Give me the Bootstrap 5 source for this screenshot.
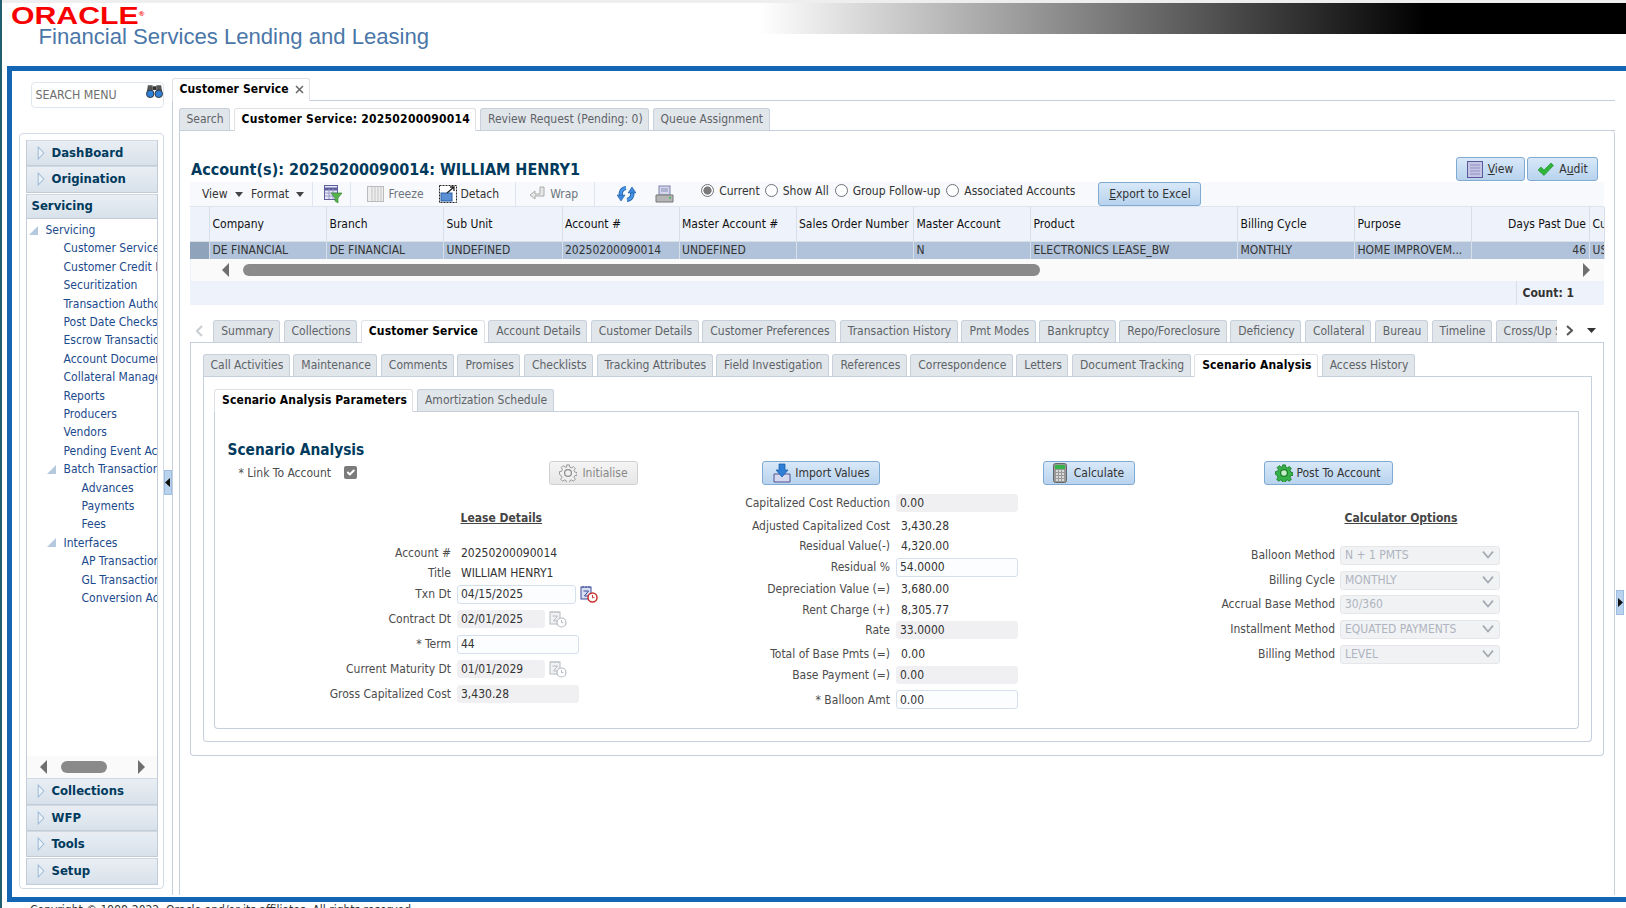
<!DOCTYPE html>
<html lang="en"><head><meta charset="utf-8"><title>Oracle Financial Services Lending and Leasing</title>
<link href="https://cdn.jsdelivr.net/npm/bootstrap@5.3.0/dist/css/bootstrap.min.css" rel="stylesheet">
<style>
html,body{margin:0;height:908px;overflow:hidden;background:#fff}
body{font-family:"DejaVu Sans Condensed","DejaVu Sans",sans-serif;font-size:12px;line-height:18px;color:#4c4c4c;width:1626px;border-left:2px solid #1f5f70;box-sizing:border-box}
.x-hdr{height:66px;border-top:3px solid #eeeeee;margin-left:-2px;padding-left:11px;background:linear-gradient(90deg,#fff 760px,#000 1426px) no-repeat 0 0/100% 31px;overflow:hidden}
.x-ora{font-family:"Liberation Sans",sans-serif;font-weight:700;font-size:24px;line-height:18px;color:#f80000;transform:scaleX(1.26);transform-origin:0 0;height:18px;margin-top:4px;overflow:visible}
.x-ora sup{font-size:6px;top:-1.4em}
.x-fin{font-family:"Liberation Sans",sans-serif;font-size:22.1px;line-height:20px;color:#4a76a8;padding-left:27.5px;margin-top:2px;white-space:nowrap}
.x-frame{margin-left:5px;height:836px;border:solid #1565b5;border-width:5px 0 5px 5.5px;display:flex;box-sizing:border-box}
.x-copy{margin-left:28px;color:#333;white-space:nowrap;font-size:12px;line-height:14px;margin-top:1px}
.x-left{width:151.5px;flex:none;padding-left:7px}
.x-search{margin:11px 0 25px 11.5px;height:26px;width:133px;border:1px solid #dfe6ee;border-radius:4px;padding:0 0 0 4px;font-size:12.3px;color:#6e6e6e;align-items:center}
.x-nav{height:756px;border:1px solid #d3dbe6;border-radius:4px;padding:6px 4.5px 3.5px 5.5px;box-sizing:border-box}
.x-acc{height:100%;display:flex;flex-direction:column}
.x-ah{height:26.3px;flex:none;display:flex;align-items:center;background:linear-gradient(#e9eef4,#d8e1ea);border:1px solid #c2ccd9;border-top-color:#d0d8e2;font-weight:700;font-size:13px;color:#003a5d;padding-left:10px;gap:7px;box-sizing:border-box}
.x-ah.x-open{padding-left:5px;margin-top:1px;height:25px}
.x-ah.x-last{margin-top:1px}
.x-tree{flex:1;min-height:0;border-left:1px solid #c2ccd9;border-right:1px solid #c2ccd9;display:flex;flex-direction:column;overflow:hidden}
.x-list{flex:1;list-style:none;margin:0;padding:2.5px 0 0;color:#1b4a8c;white-space:nowrap;overflow:hidden}
.x-list li{height:18.4px;line-height:18.4px;display:flex;align-items:center}
.x-list svg{flex:none}
.x-l1{padding-left:2px;gap:8px}.x-l2{padding-left:37px}.x-l2t{padding-left:20px;gap:8px}.x-l3{padding-left:55px}
.x-hs{height:22px;flex:none;background:#fafafa;display:flex;align-items:center;padding-left:13.5px}
.x-thumb{background:#8a8a8a;border-radius:6px;height:12px;flex:none}
.x-split{width:8px;flex:none;display:flex;align-items:center}
.x-grip{width:8px;height:25px;background:#b9d2ee;border:1px solid #9fbde0;display:flex;align-items:center;justify-content:center;margin-bottom:3px}
.x-main{flex:1;min-width:0;display:flex;flex-direction:column;height:818px;padding-top:7px;box-sizing:content-box}
.x-rsp{width:11px;flex:none;display:flex;align-items:center}
.x-rsp .x-grip{margin:237px 0 0 1px}
.nav.x-tabs{flex-wrap:nowrap;border-bottom:1px solid #c6d0dc;gap:3.5px;height:23px;align-items:flex-end;--bs-nav-tabs-border-width:0}
.x-tabs .nav-link{height:22px;line-height:20px;padding:0 5.5px 0 7px;font-size:12px;color:#5e6368;background:#e1e6ea;border:1px solid #c7d0db;border-bottom:0;border-radius:3px 3px 0 0;white-space:nowrap;margin:0}
.x-tabs .nav-link.active{background:#fff;color:#000;font-weight:700;height:23px;margin-bottom:-1px;letter-spacing:.13px}
.x-tabs .nav-link.active.x-wide{letter-spacing:.25px}
.x-xi{margin-left:2px}
.x-mb{flex:1;border-left:1px solid #c6d0dc;padding:7px 0 0 6px;min-height:0;display:flex;flex-direction:column;margin-bottom:1px}
.x-p1{flex:1;border:1px solid #c6d0dc;border-top:0;border-bottom:0;border-radius:0 4px 0 0;padding:0 10.5px;min-height:0}
.x-title{height:51px;padding-top:26px;align-items:flex-start}
.x-title h1{font-size:16px;line-height:19px;font-weight:700;color:#003a5d;margin:3px 0 0 1px}
.x-vb{gap:2.5px;margin-right:5.5px}
.x-tb{height:25px;background:#f8f9fc;align-items:center;color:#333;white-space:nowrap;border-bottom:1px solid #dfe5ee}
.x-div{width:1px;height:25px;background:#dfe5ee;flex:none}
.x-rad{appearance:none;width:13px;height:13px;border:1px solid #6d7278;border-radius:50%;background:#fff;margin:0 5px 0 0;flex:none}
.x-rad:checked{background:radial-gradient(circle,#7a7a7a 0 3.8px,#fff 4.4px)}
.x-radg{margin:-7px 0 0 27px}
.x-rs{margin-left:5px}.x-rm{margin-left:6px}
.x-btn.btn{--bs-btn-padding-y:0;--bs-btn-padding-x:0;height:24px;font-size:12px;line-height:22px;display:inline-flex;align-items:center;justify-content:center;gap:5px;color:#333;background:linear-gradient(#d8e8f8,#b8d3ee);border:1px solid #7faad2;border-radius:3px;white-space:nowrap;flex:none}
.x-btn.btn:disabled{color:#888;background:linear-gradient(#f4f4f4,#e7e7e7);border-color:#d0d0d0;opacity:1}
.x-btn.btn.x-g3{gap:3px}.x-btn.btn.x-g7{gap:7px}
.table.x-grid{table-layout:fixed;width:1414px;margin:0;color:#333;--bs-table-bg:transparent;border-collapse:collapse}
.x-grid th,.x-grid td{padding:0 3px 0 2.5px;font-weight:400;white-space:nowrap;overflow:hidden;border:0;border-right:1px solid #d8dfe9;box-shadow:none;vertical-align:middle}
.x-grid th{height:34px;background:#eef2fa;color:#111;border-bottom:1px solid #d8dfe9}
.x-grid td{height:17.5px;line-height:17px;background:#b1c3da;border-right-color:#d8dfe9}
.x-grid td:first-child{background:#8fa3bb}
.x-c0{width:19.5px}.x-c1{width:117px}.x-c2{width:118.5px}.x-c3{width:117.5px}.x-c4{width:207px}.x-c5{width:118px}.x-c6{width:14.5px}
.x-hbar{height:22px;background:#fafafa;align-items:center;border-left:1px solid #eef2fa}
.x-foot{height:24px;background:#eef2fa;justify-content:flex-end;margin-bottom:15px}
.x-count{width:88px;border-left:1px solid #d8dfe9;font-weight:700;color:#333;padding-left:6px;line-height:24px}
.x-tabrow{height:23px;border-bottom:1px solid #c6d0dc;align-items:flex-start;display:flex}
.x-clip{width:1367px;height:23px;flex:none;overflow:hidden}
.nav.x-tabs.x-t0{border:0;height:22px;gap:3.7px}
.x-chev{width:19.5px;flex:none;display:flex;align-items:center;justify-content:center;height:22px}
.x-tabend{padding-left:9px;height:22px;gap:14px;align-items:center;flex:1}
.x-p2{height:413px;border:1px solid #c6d0dc;border-top:0;border-radius:0 0 4px 4px;padding:11px 11px 0 11.5px;box-sizing:border-box}
.x-p3{height:365px;border:1px solid #c6d0dc;border-top:0;border-radius:0 0 4px 4px;padding:12px 11.5px 0 10.5px;box-sizing:border-box}
.x-p4{height:317px;border:1px solid #c6d0dc;border-top:0;border-radius:0 0 4px 4px;padding-top:28px;box-sizing:border-box}
.x-hd{font-size:15.3px;line-height:20px;font-weight:700;color:#003a5d;margin:0 0 1px 12.5px}
.x-btnrow{height:24px;align-items:center}
.x-link{width:334px;flex:none;padding-left:23.5px;gap:13px;align-items:center}
.x-link .form-check-input{width:13px;height:13px;margin:0;border-radius:2px;border:0;background-color:#7b7b7b;float:none;flex:none}
.x-cols{margin-top:9.5px;align-items:flex-start}
.x-fr{height:18px;display:flex;align-items:center;white-space:nowrap}
.x-lb{flex:none;text-align:right}
.x-ca{width:486px;flex:none}.x-ca .x-lb{width:236px;margin-right:6px}
.x-cb{width:400px;flex:none}.x-cb .x-lb{width:189px;margin-right:6px}
.x-cc{flex:1}.x-cc .x-lb{width:234px;margin-right:5px}
.x-v{padding-left:5px;color:#333}.x-ca .x-v{padding-left:4px}
.form-control.x-in{height:18px;min-height:0;padding:0 3px;font-size:12px;line-height:16px;border:1px solid #f0f0f2;background:#f0f0f2;color:#333;border-radius:3px;box-shadow:none;flex:none;width:122px}
.form-control.x-in.x-en{border-color:#d6e0ec;background:#fbfdff;height:19px}
.form-control.x-in.x-sh{width:88px}.form-control.x-in.x-md{width:119px}
.form-select.x-sel{height:19px;min-height:0;width:160px;padding:0 3px 0 4px;font-size:12px;line-height:16px;color:#aeb4bf;background-color:#f1f2f4;border:1px solid #e4e6ea;border-radius:3px;flex:none;background-size:14px 10px;background-position:right 4px center;opacity:1;--bs-form-select-bg-img:url("data:image/svg+xml,%3csvg xmlns='http://www.w3.org/2000/svg' viewBox='0 0 16 12'%3e%3cpath fill='none' stroke='%23a2a8b0' stroke-width='2' d='M2 2l6 7 6-7'/%3e%3c/svg%3e")}
.x-und{font-weight:700;text-decoration:underline;color:#444}
.x-ca .x-fr:nth-child(1){margin-top:14.5px}.x-ca .x-fr:nth-child(2){margin-top:17.5px}.x-ca .x-fr:nth-child(3){margin-top:2px}.x-ca .x-fr:nth-child(4){margin-top:3.3px}.x-ca .x-fr:nth-child(5){margin-top:7px}.x-ca .x-fr:nth-child(6){margin-top:7px}.x-ca .x-fr:nth-child(7){margin-top:7px}.x-ca .x-fr:nth-child(8){margin-top:6.5px}
.x-ca .x-fr:nth-child(1) .x-und{margin-left:245.5px}
.x-cb .x-fr:nth-child(2){margin-top:4.5px}.x-cb .x-fr:nth-child(3){margin-top:2px}.x-cb .x-fr:nth-child(4){margin-top:3.5px}.x-cb .x-fr:nth-child(5){margin-top:4px}.x-cb .x-fr:nth-child(6){margin-top:2.5px}.x-cb .x-fr:nth-child(7){margin-top:2.5px}.x-cb .x-fr:nth-child(8){margin-top:5.5px}.x-cb .x-fr:nth-child(9){margin-top:3px}.x-cb .x-fr:nth-child(10){margin-top:7px}
.x-cc .x-fr:nth-child(1){margin-top:14.5px}.x-cc .x-fr:nth-child(2){margin-top:19.500px}.x-cc .x-fr:nth-child(3){margin-top:7px}.x-cc .x-fr:nth-child(4){margin-top:6px}.x-cc .x-fr:nth-child(5){margin-top:7px}.x-cc .x-fr:nth-child(6){margin-top:7px}
.x-cc .x-fr:nth-child(1) .x-und{margin-left:243.5px}
.x-gi{color:#8f8f8f;--x-gf:#f0f0f0;--x-gc:#f0f0f0}
.x-gp{color:#1c7f29;--x-gf:#37b24a;--x-gc:#c6ecc9}
.x-hsl{margin:0 14px 0 0}.x-hsr{margin-left:31px}
.x-a1{margin-left:31px}.x-a2{margin-left:543px}.x-tm{margin-left:14px}
.x-f1{margin-left:11px}.x-d1{margin:0 16px 0 7px}.x-de{margin-left:15px}.x-w1{margin-left:5px}.x-w2{margin-left:5px}
.x-ic{margin-left:22px}.x-ic2{margin-left:19px}
.x-b69{width:69px}.x-b71{width:71px}.x-b103{width:103px;margin-left:23px}
.x-b89{width:89px}.x-b118{width:118px;margin-left:124px}.x-b92{width:92px;margin-left:162.5px}.x-b129{width:129px;margin-left:129px}
</style></head>
<body>
<svg width="0" height="0" class="d-block"><defs>
<symbol id="i-tri" viewBox="0 0 10 18"><path d="M1.500 1.500L8.500 9l-7 7.500z" fill="#eef3f8" stroke="#9dbbd9" stroke-width="1.300"/></symbol>
<symbol id="i-cal" viewBox="0 0 18 18"><rect x="1" y="2" width="10" height="12" fill="#d9dff0" stroke="#3b4a9c"/><path d="M3 1v2M6 1v2M9 1v2" stroke="#3b4a9c"/><path d="M3.500 6h5l-4 5h4.500" fill="none" stroke="#3b4a9c"/><circle cx="12.500" cy="12.500" r="4.500" fill="#fff" stroke="#c9302c" stroke-width="1.500"/><path d="M12.500 10v2.700h2" fill="none" stroke="#c9302c"/></symbol>
<symbol id="i-calg" viewBox="0 0 18 18"><rect x="1" y="2" width="10" height="12" fill="#f2f2f2" stroke="#b5bbc2"/><path d="M3 1v2M6 1v2M9 1v2" stroke="#b5bbc2"/><path d="M3.500 6h5l-4 5h4.500" fill="none" stroke="#b5bbc2"/><circle cx="12.500" cy="12.500" r="4.500" fill="#fff" stroke="#b5bbc2" stroke-width="1.200"/><path d="M12.500 10v2.700h2" fill="none" stroke="#b5bbc2"/></symbol>
<symbol id="i-gear" viewBox="0 0 20 20"><path d="M8.500 1h3l.5 2.500 1.800.8 2.200-1.400 2.100 2.100-1.400 2.200.8 1.800 2.500.5v3l-2.500.5-.8 1.800 1.400 2.200-2.100 2.100-2.200-1.400-1.800.8-.5 2.500h-3l-.5-2.500-1.800-.8-2.200 1.400-2.100-2.100 1.400-2.200-.8-1.800L.5 11.500v-3L3 8l.8-1.800-1.400-2.200 2.100-2.100 2.200 1.400L8.500 3.500z" style="fill:var(--x-gf)" stroke="currentColor" stroke-width="1"/><circle cx="10" cy="10" r="3.800" style="fill:var(--x-gc)" stroke="currentColor" stroke-width="1.400"/></symbol>
</defs></svg>

<header class="x-hdr">
  <div class="x-ora">ORACLE<sup>®</sup></div>
  <div class="x-fin">Financial Services Lending and Leasing</div>
</header>

<div class="x-frame">
  <aside class="x-left">
    <div class="x-search d-flex justify-content-between">
      <span>SEARCH MENU</span>
      <svg width="17" height="16" viewBox="0 0 18 16" class="align-self-start"><path d="M2 2h5v6H5.500L1 8z M16 2h-5v6h1.500L17 8z" fill="#555"/><rect x="7" y="3" width="4" height="4" fill="#333"/><circle cx="4.500" cy="11" r="4" fill="#2f7fd6" stroke="#333"/><circle cx="13.500" cy="11" r="4" fill="#2f7fd6" stroke="#333"/></svg>
    </div>
    <nav class="x-nav"><div class="x-acc">
      <div class="x-ah"><svg width="8" height="16"><use href="#i-tri"/></svg>DashBoard</div>
      <div class="x-ah"><svg width="8" height="16"><use href="#i-tri"/></svg>Origination</div>
      <div class="x-ah x-open">Servicing</div>
      <div class="x-tree">
        <ul class="x-list">
          <li class="x-l1"><svg width="9" height="9"><path d="M0 9L9 0v9z" fill="#b5c9de"/></svg>Servicing</li>
          <li class="x-l2">Customer Service</li><li class="x-l2">Customer Credit Limits</li><li class="x-l2">Securitization</li><li class="x-l2">Transaction Authorization</li><li class="x-l2">Post Date Checks</li><li class="x-l2">Escrow Transactions</li><li class="x-l2">Account Documents</li><li class="x-l2">Collateral Management</li><li class="x-l2">Reports</li><li class="x-l2">Producers</li><li class="x-l2">Vendors</li><li class="x-l2">Pending Event Actions</li>
          <li class="x-l2t"><svg width="9" height="9"><path d="M0 9L9 0v9z" fill="#b5c9de"/></svg>Batch Transactions</li>
          <li class="x-l3">Advances</li><li class="x-l3">Payments</li><li class="x-l3">Fees</li>
          <li class="x-l2t"><svg width="9" height="9"><path d="M0 9L9 0v9z" fill="#b5c9de"/></svg>Interfaces</li>
          <li class="x-l3">AP Transactions</li><li class="x-l3">GL Transactions</li><li class="x-l3">Conversion Accounts</li>
        </ul>
        <div class="x-hs">
          <svg class="x-hsl" width="7" height="14" viewBox="0 0 7 14"><path d="M7 0v14L0 7z" fill="#6f6f6f"/></svg>
          <div class="x-thumb" style="width:46px"></div>
          <svg class="x-hsr" width="7" height="14" viewBox="0 0 7 14"><path d="M0 0v14l7-7z" fill="#6f6f6f"/></svg>
        </div>
      </div>
      <div class="x-ah"><svg width="8" height="16"><use href="#i-tri"/></svg>Collections</div>
      <div class="x-ah"><svg width="8" height="16"><use href="#i-tri"/></svg>WFP</div>
      <div class="x-ah"><svg width="8" height="16"><use href="#i-tri"/></svg>Tools</div>
      <div class="x-ah x-last"><svg width="8" height="16"><use href="#i-tri"/></svg>Setup</div>
    </div></nav>
  </aside>
  <div class="x-split"><div class="x-grip"><svg width="5" height="9"><path d="M5 0v9L0 4.500z" fill="#111"/></svg></div></div>

  <main class="x-main">
    <ul class="nav nav-tabs x-tabs"><li class="nav-item"><a class="nav-link active" href="#">Customer Service <svg width="9" height="9" class="x-xi"><path d="M1 1l7 7M8 1l-7 7" stroke="#666" stroke-width="1.500"/></svg></a></li></ul>
    <div class="x-mb">
      <ul class="nav nav-tabs x-tabs">
        <li class="nav-item"><a class="nav-link" href="#">Search</a></li>
        <li class="nav-item"><a class="nav-link active x-wide" href="#">Customer Service: 20250200090014</a></li>
        <li class="nav-item"><a class="nav-link" href="#">Review Request (Pending: 0)</a></li>
        <li class="nav-item"><a class="nav-link" href="#">Queue Assignment</a></li>
      </ul>
      <div class="x-p1">
        <div class="x-title d-flex justify-content-between">
          <h1>Account(s): 20250200090014: WILLIAM HENRY1</h1>
          <div class="d-flex x-vb">
            <button class="btn x-btn x-b69" type="button"><svg width="16" height="17" viewBox="0 0 16 17"><rect x=".5" y=".5" width="15" height="16" fill="#c4c4e4" stroke="#59599c"/><path d="M3 4h10M3 7h10M3 10h10M3 13h10" stroke="#8f8fc4"/></svg><span><u>V</u>iew</span></button>
            <button class="btn x-btn x-b71" type="button"><svg width="17" height="14" viewBox="0 0 17 14"><path d="M1 8l3-3 3 3 7-7 2.500 2.500L7 13.500z" fill="#2fb53a" stroke="#1d8a28" stroke-width=".6"/></svg><span>A<u>u</u>dit</span></button>
          </div>
        </div>
        <div class="x-tb d-flex">
          <span class="ms-2 ps-1">View <svg width="8" height="5" class="ms-1"><path d="M0 0h8L4 5z" fill="#444"/></svg></span>
          <span class="ms-2">Format <svg width="8" height="5" class="ms-1"><path d="M0 0h8L4 5z" fill="#444"/></svg></span>
          <span class="x-div ms-2"></span>
          <svg class="x-f1" width="19" height="18" viewBox="0 0 19 18"><rect x=".5" y=".5" width="13" height="14" fill="#e7e7f5" stroke="#5f5fa0"/><path d="M1 4h12" stroke="#5f5fa0" stroke-width="3"/><path d="M1 8h12M1 11h12M5 4v10M9 4v10" stroke="#9a9acb"/><path d="M7 8h11l-4 5v5l-3-2v-3z" fill="#56b34d" stroke="#2e7f2a" stroke-width=".6"/></svg>
          <span class="x-div x-d1"></span>
          <svg width="17" height="18" viewBox="0 0 17 18"><rect x=".5" y="1.500" width="16" height="15" fill="#eee" stroke="#bbb"/><path d="M5 2v14M8 2v14M11 2v14M14 2v14" stroke="#c4c4c4"/></svg>
          <span class="ms-1 text-secondary">Freeze</span>
          <svg class="x-de" width="18" height="18" viewBox="0 0 18 18"><rect x=".5" y=".5" width="17" height="17" fill="#fff" stroke="#222" stroke-dasharray="2 1"/><rect x="2" y="8" width="11" height="8" fill="#5b8fd3" stroke="#2b5ea5"/><path d="M8 8l7-6M11 2h4v4" fill="none" stroke="#222" stroke-width="1.300"/></svg>
          <span class="ms-1">Detach</span>
          <span class="x-div ms-3 me-2"></span>
          <svg class="x-w1" width="16" height="16" viewBox="0 0 16 16"><path d="M11 1h4v9H6v3L1 9l5-4v3h5z" fill="#e8e8e8" stroke="#a9a9a9"/></svg>
          <span class="x-w2 text-secondary">Wrap</span>
          <span class="x-div ms-3"></span>
          <svg class="x-ic" width="19" height="18" viewBox="0 0 19 18"><path d="M9 3A6 6 0 0 0 4 11" fill="none" stroke="#1a5aa8" stroke-width="4.200"/><path d="M9 3A6 6 0 0 0 4 11" fill="none" stroke="#4a96e6" stroke-width="2.600"/><path d="M0 10h8l-4 6z" fill="#3d86d8" stroke="#1a5aa8" stroke-width=".6"/><path d="M10 15a6 6 0 0 0 5-8" fill="none" stroke="#1a5aa8" stroke-width="4.200"/><path d="M10 15a6 6 0 0 0 5-8" fill="none" stroke="#4a96e6" stroke-width="2.600"/><path d="M19 8h-8l4-6z" fill="#3d86d8" stroke="#1a5aa8" stroke-width=".6"/></svg>
          <svg class="x-ic2" width="19" height="18" viewBox="0 0 19 18"><rect x="4" y="1" width="11" height="9" fill="#d4d6ee" stroke="#7f82a8"/><path d="M1 10h17v7H1z" fill="#b5b5b5" stroke="#777"/><path d="M6 4h7M6 6h7" stroke="#8c8fb5"/><rect x="14" y="12" width="2" height="1.500" fill="#3bb54a"/></svg>
          <div class="d-flex align-items-center x-radg">
            <input class="x-rad" type="radio" name="acc" checked aria-label="Current"><span>Current</span>
            <input class="x-rad x-rs" type="radio" name="acc" aria-label="Show All"><span>Show All</span>
            <input class="x-rad x-rm" type="radio" name="acc" aria-label="Group Follow-up"><span>Group Follow-up</span>
            <input class="x-rad x-rm" type="radio" name="acc" aria-label="Associated Accounts"><span>Associated Accounts</span>
          </div>
          <button class="btn x-btn x-b103" type="button"><span><u>E</u>xport to Excel</span></button>
        </div>
        <table class="table x-grid">
          <thead><tr><th class="x-c0"></th><th class="x-c1">Company</th><th class="x-c1">Branch</th><th class="x-c2">Sub Unit</th><th class="x-c1">Account #</th><th class="x-c1">Master Account #</th><th class="x-c3">Sales Order Number</th><th class="x-c1">Master Account</th><th class="x-c4">Product</th><th class="x-c1">Billing Cycle</th><th class="x-c1">Purpose</th><th class="x-c5 text-end">Days Past Due</th><th class="x-c6">Cu</th></tr></thead>
          <tbody><tr><td></td><td>DE FINANCIAL</td><td>DE FINANCIAL</td><td>UNDEFINED</td><td>20250200090014</td><td>UNDEFINED</td><td></td><td>N</td><td>ELECTRONICS LEASE_BW</td><td>MONTHLY</td><td>HOME IMPROVEM...</td><td class="text-end">46</td><td>US</td></tr></tbody>
        </table>
        <div class="x-hbar d-flex">
          <svg class="x-a1" width="7" height="14" viewBox="0 0 7 14"><path d="M7 0v14L0 7z" fill="#6f6f6f"/></svg>
          <div class="x-thumb x-tm" style="width:797px"></div>
          <svg class="x-a2" width="7" height="14" viewBox="0 0 7 14"><path d="M0 0v14l7-7z" fill="#6f6f6f"/></svg>
        </div>
        <div class="x-foot d-flex"><div class="x-count">Count: 1</div></div>

        <div class="x-tabrow">
          <div class="x-clip">
            <ul class="nav nav-tabs x-tabs x-t0">
              <li class="nav-item x-chev"><svg width="7" height="12"><path d="M6 1L1 6l5 5" fill="none" stroke="#c9ced5" stroke-width="2"/></svg></li>
              <li class="nav-item"><a class="nav-link" href="#">Summary</a></li><li class="nav-item"><a class="nav-link" href="#">Collections</a></li><li class="nav-item"><a class="nav-link active" href="#">Customer Service</a></li><li class="nav-item"><a class="nav-link" href="#">Account Details</a></li><li class="nav-item"><a class="nav-link" href="#">Customer Details</a></li><li class="nav-item"><a class="nav-link" href="#">Customer Preferences</a></li><li class="nav-item"><a class="nav-link" href="#">Transaction History</a></li><li class="nav-item"><a class="nav-link" href="#">Pmt Modes</a></li><li class="nav-item"><a class="nav-link" href="#">Bankruptcy</a></li><li class="nav-item"><a class="nav-link" href="#">Repo/Foreclosure</a></li><li class="nav-item"><a class="nav-link" href="#">Deficiency</a></li><li class="nav-item"><a class="nav-link" href="#">Collateral</a></li><li class="nav-item"><a class="nav-link" href="#">Bureau</a></li><li class="nav-item"><a class="nav-link" href="#">Timeline</a></li><li class="nav-item"><a class="nav-link" href="#">Cross/Up Sell</a></li>
            </ul>
          </div>
          <div class="d-flex x-tabend">
            <svg width="7" height="11"><path d="M1 1l5 4.500L1 10" fill="none" stroke="#555" stroke-width="2"/></svg>
            <svg width="9" height="5"><path d="M0 0h9L4.500 5z" fill="#333"/></svg>
          </div>
        </div>
        <div class="x-p2">
          <ul class="nav nav-tabs x-tabs">
            <li class="nav-item"><a class="nav-link" href="#">Call Activities</a></li><li class="nav-item"><a class="nav-link" href="#">Maintenance</a></li><li class="nav-item"><a class="nav-link" href="#">Comments</a></li><li class="nav-item"><a class="nav-link" href="#">Promises</a></li><li class="nav-item"><a class="nav-link" href="#">Checklists</a></li><li class="nav-item"><a class="nav-link" href="#">Tracking Attributes</a></li><li class="nav-item"><a class="nav-link" href="#">Field Investigation</a></li><li class="nav-item"><a class="nav-link" href="#">References</a></li><li class="nav-item"><a class="nav-link" href="#">Correspondence</a></li><li class="nav-item"><a class="nav-link" href="#">Letters</a></li><li class="nav-item"><a class="nav-link" href="#">Document Tracking</a></li><li class="nav-item"><a class="nav-link active" href="#">Scenario Analysis</a></li><li class="nav-item"><a class="nav-link" href="#">Access History</a></li>
          </ul>
          <div class="x-p3">
            <ul class="nav nav-tabs x-tabs">
              <li class="nav-item"><a class="nav-link active" href="#">Scenario Analysis Parameters</a></li><li class="nav-item"><a class="nav-link" href="#">Amortization Schedule</a></li>
            </ul>
            <div class="x-p4">
              <h2 class="x-hd">Scenario Analysis</h2>
              <div class="x-btnrow d-flex">
                <label class="x-link d-flex"><span>* Link To Account</span><input class="form-check-input" type="checkbox" checked></label>
                <button class="btn x-btn x-b89" disabled type="button"><svg class="x-gi" width="18" height="18"><use href="#i-gear"/></svg>Initialise</button>
                <button class="btn x-btn x-b118 x-g3" type="button"><svg width="20" height="20" viewBox="0 0 20 20"><path d="M2 11h16v8H2z" fill="#d5d8ee" stroke="#4e5391"/><path d="M7 1h6v6h3l-6 7-6-7h3z" fill="#2f7fd6" stroke="#1a5aa8" stroke-width=".7"/></svg>Import Values</button>
                <button class="btn x-btn x-b92 x-g7" type="button"><svg width="14" height="20" viewBox="0 0 14 20"><rect x=".5" y=".5" width="13" height="19" rx="2" fill="#9a9a9a" stroke="#666"/><rect x="2" y="2" width="10" height="4" fill="#36b44a"/><path d="M3 8h2M6 8h2M9 8h2M3 11h2M6 11h2M9 11h2M3 14h2M6 14h2M9 14h2M3 17h2M6 17h2M9 17h2" stroke="#eee" stroke-width="1.500"/></svg>Calculate</button>
                <button class="btn x-btn x-b129 x-g3" type="button"><svg class="x-gp" width="18" height="18"><use href="#i-gear"/></svg>Post To Account</button>
              </div>
              <div class="x-cols d-flex">
                <div class="x-ca">
                  <div class="x-fr"><span class="x-und">Lease Details</span></div>
                  <div class="x-fr"><span class="x-lb">Account #</span><span class="x-v">20250200090014</span></div>
                  <div class="x-fr"><span class="x-lb">Title</span><span class="x-v">WILLIAM HENRY1</span></div>
                  <div class="x-fr"><span class="x-lb">Txn Dt</span><input class="form-control x-in x-en x-md" value="04/15/2025" aria-label="Txn Dt"><svg class="ms-1" width="18" height="18"><use href="#i-cal"/></svg></div>
                  <div class="x-fr"><span class="x-lb">Contract Dt</span><input class="form-control x-in x-sh" value="02/01/2025" readonly aria-label="Contract Dt"><svg class="ms-1" width="18" height="18"><use href="#i-calg"/></svg></div>
                  <div class="x-fr"><span class="x-lb">* Term</span><input class="form-control x-in x-en" value="44" aria-label="Term"></div>
                  <div class="x-fr"><span class="x-lb">Current Maturity Dt</span><input class="form-control x-in x-sh" value="01/01/2029" readonly aria-label="Current Maturity Dt"><svg class="ms-1" width="18" height="18"><use href="#i-calg"/></svg></div>
                  <div class="x-fr"><span class="x-lb">Gross Capitalized Cost</span><input class="form-control x-in" value="3,430.28" readonly aria-label="Gross Capitalized Cost"></div>
                </div>
                <div class="x-cb">
                  <div class="x-fr"><span class="x-lb">Capitalized Cost Reduction</span><input class="form-control x-in" value="0.00" readonly aria-label="Capitalized Cost Reduction"></div>
                  <div class="x-fr"><span class="x-lb">Adjusted Capitalized Cost</span><span class="x-v">3,430.28</span></div>
                  <div class="x-fr"><span class="x-lb">Residual Value(-)</span><span class="x-v">4,320.00</span></div>
                  <div class="x-fr"><span class="x-lb">Residual %</span><input class="form-control x-in x-en" value="54.0000" aria-label="Residual %"></div>
                  <div class="x-fr"><span class="x-lb">Depreciation Value (=)</span><span class="x-v">3,680.00</span></div>
                  <div class="x-fr"><span class="x-lb">Rent Charge (+)</span><span class="x-v">8,305.77</span></div>
                  <div class="x-fr"><span class="x-lb">Rate</span><input class="form-control x-in" value="33.0000" readonly aria-label="Rate"></div>
                  <div class="x-fr"><span class="x-lb">Total of Base Pmts (=)</span><span class="x-v">0.00</span></div>
                  <div class="x-fr"><span class="x-lb">Base Payment (=)</span><input class="form-control x-in" value="0.00" readonly aria-label="Base Payment"></div>
                  <div class="x-fr"><span class="x-lb">* Balloon Amt</span><input class="form-control x-in x-en" value="0.00" aria-label="Balloon Amt"></div>
                </div>
                <div class="x-cc">
                  <div class="x-fr"><span class="x-und">Calculator Options</span></div>
                  <div class="x-fr"><span class="x-lb">Balloon Method</span><select class="form-select x-sel" disabled aria-label="Balloon Method"><option>N + 1 PMTS</option></select></div>
                  <div class="x-fr"><span class="x-lb">Billing Cycle</span><select class="form-select x-sel" disabled aria-label="Billing Cycle"><option>MONTHLY</option></select></div>
                  <div class="x-fr"><span class="x-lb">Accrual Base Method</span><select class="form-select x-sel" disabled aria-label="Accrual Base Method"><option>30/360</option></select></div>
                  <div class="x-fr"><span class="x-lb">Installment Method</span><select class="form-select x-sel" disabled aria-label="Installment Method"><option>EQUATED PAYMENTS</option></select></div>
                  <div class="x-fr"><span class="x-lb">Billing Method</span><select class="form-select x-sel" disabled aria-label="Billing Method"><option>LEVEL</option></select></div>
                </div>
              </div>
            </div>
          </div>
        </div>
      </div>
    </div>
  </main>
  <div class="x-rsp"><div class="x-grip"><svg width="5" height="9"><path d="M0 0v9l5-4.500z" fill="#111"/></svg></div></div>
</div>
<div class="x-copy">Copyright © 1998-2022, Oracle and/or its affiliates. All rights reserved.</div>
<script src="https://cdn.jsdelivr.net/npm/bootstrap@5.3.0/dist/js/bootstrap.bundle.min.js"></script>
</body></html>
